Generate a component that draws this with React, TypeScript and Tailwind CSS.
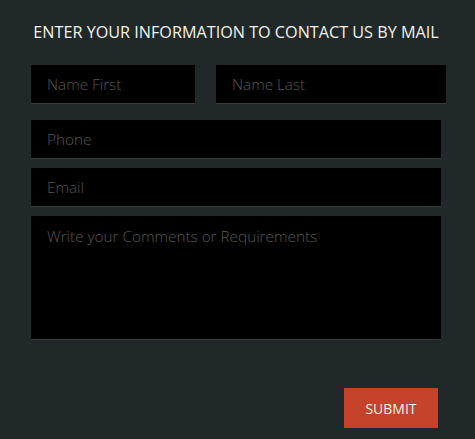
export default function App() {
  return (
    <div className="w-[475px] h-[439px] bg-[#212829] pl-[31px] pr-[34px] pt-[22px] font-['Open_Sans',sans-serif]">
      <h2 className="text-center text-[16.2px] leading-[20px] text-[#f2f2e8]">
        ENTER YOUR INFORMATION TO CONTACT US BY MAIL
      </h2>
      <form className="mt-[23px] flex flex-col">
        <div className="flex gap-[21px]">
          <input
            placeholder="Name First"
            className="w-[164px] h-[39px] bg-black border-b border-[#3a3d3d] px-4 text-[15.3px] font-light text-[#ccc] placeholder:text-[#5a5750] outline-none"
          />
          <input
            placeholder="Name Last"
            className="flex-1 h-[39px] bg-black border-b border-[#3a3d3d] px-4 text-[15.3px] font-light text-[#ccc] placeholder:text-[#5a5750] outline-none"
          />
        </div>
        <input
          placeholder="Phone"
          className="mt-[16px] h-[39px] bg-black border-b border-[#3a3d3d] px-4 text-[15.3px] font-light text-[#ccc] placeholder:text-[#5a5750] outline-none"
        />
        <input
          placeholder="Email"
          className="mt-[9px] h-[39px] bg-black border-b border-[#3a3d3d] px-4 text-[15.3px] font-light text-[#ccc] placeholder:text-[#5a5750] outline-none"
        />
        <textarea
          placeholder="Write your Comments or Requirements"
          className="mt-[9px] h-[124px] resize-none bg-black border-b border-[#3a3d3d] px-4 pt-[10px] text-[15.3px] font-light leading-[20px] text-[#ccc] placeholder:text-[#5a5750] outline-none"
        />
        <div className="flex justify-end mt-[48px] pr-[3px]">
          <button
            type="button"
            className="w-[94px] h-[40px] bg-[#c4432a] text-[14px] text-[#f5f0ea]"
          >
            SUBMIT
          </button>
        </div>
      </form>
    </div>
  );
}
